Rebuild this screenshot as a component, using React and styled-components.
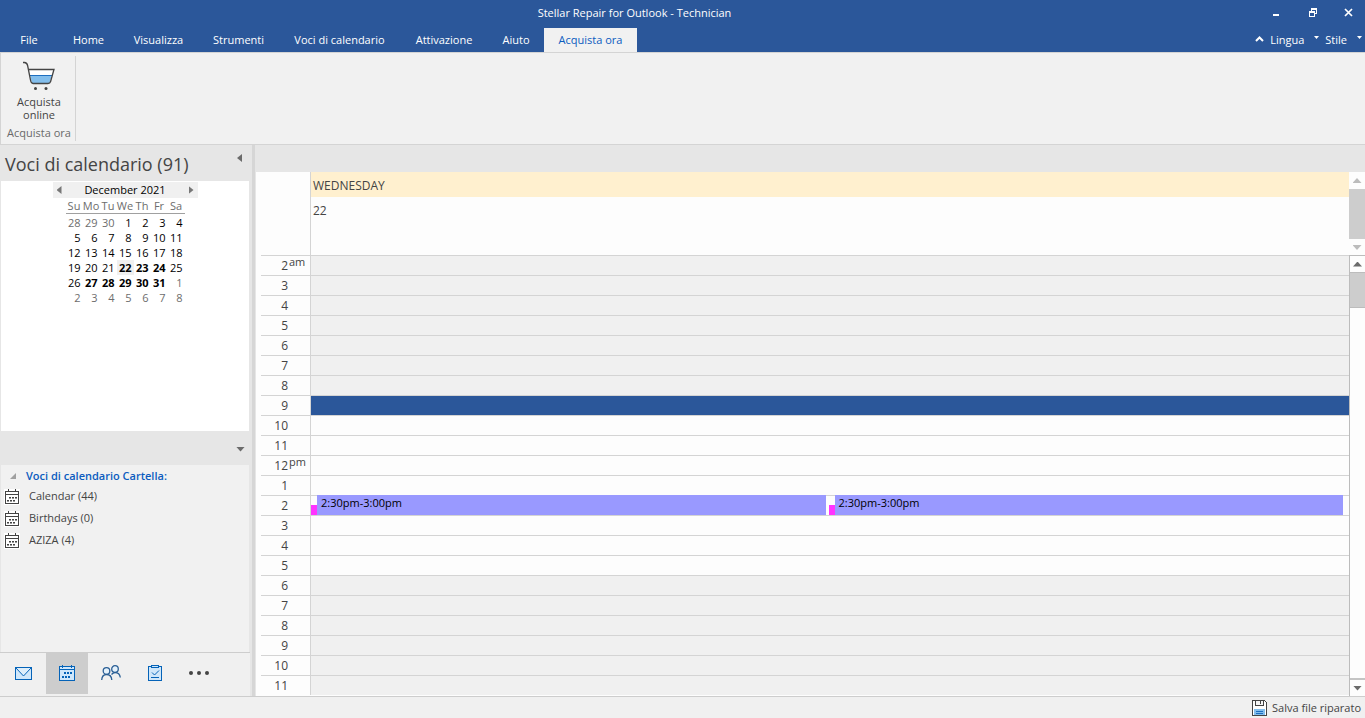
import { useState } from 'react';
import styled, { createGlobalStyle } from 'styled-components';

const tabs = [
  { name: 'File', width: 58 },
  { name: 'Home', width: 61 },
  { name: 'Visualizza', width: 79 },
  { name: 'Strumenti', width: 81 },
  { name: 'Voci di calendario', width: 121 },
  { name: 'Attivazione', width: 88 },
  { name: 'Aiuto', width: 56 },
  { name: 'Acquista ora', width: 93 },
];

const weekdays = ['Su', 'Mo', 'Tu', 'We', 'Th', 'Fr', 'Sa'];

// days of the previous and next month are muted, days with entries are bold
const weeks = [
  [28, 29, 30, 1, 2, 3, 4],
  [5, 6, 7, 8, 9, 10, 11],
  [12, 13, 14, 15, 16, 17, 18],
  [19, 20, 21, 22, 23, 24, 25],
  [26, 27, 28, 29, 30, 31, 1],
  [2, 3, 4, 5, 6, 7, 8],
];
const bold = [22, 23, 24, 27, 28, 29, 30, 31];

const isMuted = (week, day) => (week === 0 && day > 20) || (week > 3 && day < 10);
const isBold = (week, day) => week > 2 && bold.includes(day);

const folders = ['Calendar (44)', 'Birthdays (0)', 'AZIZA (4)'];

const hours = Array.from({ length: 22 }, (_, i) => i + 2);

const events = {
  14: ['2:30pm-3:00pm', '2:30pm-3:00pm'],
};

export default function App() {

  const [activeTab, setActiveTab] = useState('Acquista ora');
  const [activeHour, setActiveHour] = useState(9);

  return (
    <>
    <GlobalStyle />
    <Window>

      <TitleBar>
        <Title>Stellar Repair for Outlook - Technician</Title>
        <WindowButtons>
          <WindowButton aria-label="Minimize"><MinimizeIcon /></WindowButton>
          <WindowButton aria-label="Restore"><RestoreIcon /></WindowButton>
          <WindowButton aria-label="Close"><CloseIcon /></WindowButton>
        </WindowButtons>
      </TitleBar>

      <TabBar>
        {tabs.map(tab => (
          <Tab
            key={tab.name}
            $width={tab.width}
            $active={tab.name === activeTab}
            onClick={() => setActiveTab(tab.name)}
          >
            {tab.name}
          </Tab>
        ))}
        <TabBarOptions>
          <OptionButton>
            <svg width="9" height="8" viewBox="0 0 9 8"><path d="M1 5L4.500 1.500L8 5" fill="none" stroke="#fff" strokeWidth="2" /></svg>
            Lingua
          </OptionButton>
          <OptionButton>
            <SmallCaret />
            Stile
          </OptionButton>
          <SmallCaret />
        </TabBarOptions>
      </TabBar>

      <Ribbon>
        <RibbonGroup>
          <RibbonButton>
            <CartIcon />
            Acquista online
          </RibbonButton>
          <RibbonLabel>Acquista ora</RibbonLabel>
        </RibbonGroup>
      </Ribbon>

      <Body>
        <Sidebar>
          <SidebarHeader>
            <SidebarTitle>Voci di calendario (91)</SidebarTitle>
            <CollapseButton aria-label="Collapse"><Arrow $dir="left" $color="#6b6b6b" /></CollapseButton>
          </SidebarHeader>

          <MonthPanel>
            <MonthBar>
              <IconButton aria-label="Previous month"><Arrow $dir="left" $color="#777" /></IconButton>
              <MonthName>December 2021</MonthName>
              <IconButton aria-label="Next month"><Arrow $dir="right" $color="#777" /></IconButton>
            </MonthBar>
            <MonthTable>
              <thead>
                <tr>{weekdays.map(day => <Weekday key={day}>{day}</Weekday>)}</tr>
              </thead>
              <tbody>
                {weeks.map((week, w) => (
                  <tr key={w}>
                    {week.map(day => (
                      <Day key={day} $muted={isMuted(w, day)} $bold={isBold(w, day)} $today={w === 3 && day === 22}>
                        {day}
                      </Day>
                    ))}
                  </tr>
                ))}
              </tbody>
            </MonthTable>
          </MonthPanel>

          <FilterBar>
            <IconButton aria-label="Options"><WideArrow $dir="down" $color="#6b6b6b" /></IconButton>
          </FilterBar>

          <FolderPanel>
            <FolderHeading>
              <svg width="6" height="6" viewBox="0 0 6 6"><path d="M6 0V6H0Z" fill="#a0a0a0" /></svg>
              Voci di calendario Cartella:
            </FolderHeading>
            {folders.map(folder => (
              <Folder key={folder}>
                <FolderIcon />
                <FolderName>{folder}</FolderName>
              </Folder>
            ))}
          </FolderPanel>

          <NavBar>
            <NavButton aria-label="Mail"><MailIcon /></NavButton>
            <NavButton aria-label="Calendar" $active><CalendarIcon /></NavButton>
            <NavButton aria-label="People"><PeopleIcon /></NavButton>
            <NavButton aria-label="Tasks"><TaskIcon /></NavButton>
            <NavButton aria-label="More"><MoreIcon /></NavButton>
          </NavBar>
        </Sidebar>

        <Splitter />

        <Main>
          <DayHeader>
            <Corner />
            <DayInfo>
              <DayName>WEDNESDAY</DayName>
              <DayNumber>22</DayNumber>
            </DayInfo>
            <ScrollBar>
              <ScrollButton $height={17} aria-label="Scroll header up"><WideArrow $dir="up" $color="#bcbcbc" /></ScrollButton>
              <Thumb $height={50} />
              <ScrollButton $height={17} aria-label="Scroll header down"><WideArrow $dir="down" $color="#bcbcbc" /></ScrollButton>
            </ScrollBar>
          </DayHeader>

          <DayView>
            <Hours>
              {hours.map(hour => (
                <HourRow key={hour}>
                  <HourLabel>
                    <HourNumber>{hour > 12 ? hour - 12 : hour}</HourNumber>
                    {hour === 2 && <Meridiem>am</Meridiem>}
                    {hour === 12 && <Meridiem>pm</Meridiem>}
                  </HourLabel>
                  <Slot
                    $off={hour < 9 || hour > 17}
                    $active={hour === activeHour}
                    onClick={() => setActiveHour(hour)}
                  >
                    {(events[hour] || []).map((time, i) => (
                      <Event key={i}>
                        <EventMark />
                        <EventBody>{time}</EventBody>
                      </Event>
                    ))}
                  </Slot>
                </HourRow>
              ))}
            </Hours>
            <ScrollBar $framed>
              <ScrollButton $height={17} $edge="bottom" aria-label="Scroll up"><WideArrow $dir="up" $color="#6b6b6b" /></ScrollButton>
              <Thumb $height={34} />
              <Track />
              <ScrollButton $height={18} $edge="top" aria-label="Scroll down"><WideArrow $dir="down" $color="#6b6b6b" /></ScrollButton>
            </ScrollBar>
          </DayView>
        </Main>
      </Body>

      <StatusBar>
        <SaveButton>
          <SaveIcon />
          Salva file riparato
        </SaveButton>
      </StatusBar>

    </Window>
    </>
  );
};

const MinimizeIcon = () => (
  <svg width="11" height="11" viewBox="0 0 11 11"><rect x="1" y="7" width="6" height="2" fill="#fff" /></svg>
);

const RestoreIcon = () => (
  <svg width="9" height="9" viewBox="0 0 9 9" fill="#fff" shapeRendering="crispEdges">
    <path d="M2 0H8V6H6V5H7V2H3V3H2Z" />
    <path d="M0 3H6V9H0ZM1 5V8H5V5Z" fillRule="evenodd" />
  </svg>
);

const CloseIcon = () => (
  <svg width="9" height="9" viewBox="0 0 9 9"><path d="M1 1L8 8M8 1L1 8" stroke="#fff" strokeWidth="1.700" /></svg>
);

const SmallCaret = () => (
  <Caret width="5" height="4" viewBox="0 0 5 4"><path d="M0 0H5L2.500 3Z" fill="#fff" /></Caret>
);

const CartIcon = () => (
  <svg width="34" height="30" viewBox="0 0 34 30" fill="none">
    <path d="M7 9H31L29.500 14H8Z" fill="#fff" />
    <path d="M8 14H30L27.500 22H10Z" fill="#83beec" />
    <path d="M8 14.500H30" stroke="#1e6fc0" />
    <path d="M1 1.500H2.500Q5 1.800 5.600 4.500L8.500 19Q9 22.500 11 22.500H26Q28 22.500 28.600 20.500L32 8.500H6.500" stroke="#444" strokeWidth="1.300" />
    <circle cx="13.500" cy="27.500" r="1.500" fill="#444" />
    <circle cx="24" cy="27.500" r="1.500" fill="#444" />
  </svg>
);

const FolderIcon = () => (
  <svg width="16" height="16" viewBox="0 0 16 16" shapeRendering="crispEdges">
    <rect width="16" height="16" fill="#fff" />
    <path d="M1 2H15V15H1ZM2 3V5H14V3ZM2 6V14H14V6Z" fill="#444" fillRule="evenodd" />
    <path d="M4 0H5V3H4ZM11 0H12V3H11Z" fill="#444" />
    <path d="M5 8H7V9H5ZM8 8H10V9H8ZM11 8H13V9H11ZM3 11H5V12H3ZM6 11H8V12H6ZM9 11H11V12H9Z" fill="#444" />
    <path d="M5 9H7V10H5ZM8 9H10V10H8ZM11 9H13V10H11ZM3 12H5V13H3ZM6 12H8V13H6ZM9 12H11V13H9Z" fill="#999" />
  </svg>
);

const MailIcon = () => (
  <svg width="17" height="13" viewBox="0 0 17 13">
    <rect x="0.500" y="0.500" width="16" height="12" fill="#d0e7fa" stroke="#0563b8" />
    <path d="M1 1L8.500 9L16 1" fill="#deeefa" stroke="#0563b8" />
  </svg>
);

const CalendarIcon = () => (
  <svg width="16" height="16" viewBox="0 0 16 16" shapeRendering="crispEdges">
    <rect x="0" y="1" width="16" height="15" fill="#0563b8" />
    <rect x="1" y="2" width="14" height="2" fill="#cfe7fb" />
    <rect x="1" y="5" width="14" height="10" fill="#cfe7fb" />
    <path d="M3 0H4V3H3ZM12 0H13V3H12Z" fill="#0563b8" />
    <path d="M5 7H7V9H5ZM8 7H10V9H8ZM11 7H13V9H11ZM3 11H5V13H3ZM6 11H8V13H6ZM9 11H11V13H9Z" fill="#0563b8" />
  </svg>
);

const PeopleIcon = () => (
  <svg width="20" height="16" viewBox="0 0 20 16" fill="none" stroke="#2b5f95" strokeWidth="1.300">
    <circle cx="14" cy="4" r="3.300" fill="#e4f1fb" />
    <path d="M10.500 9.500Q12 7.700 14 7.700Q18.700 7.700 19.300 12.500" />
    <circle cx="5.500" cy="6" r="3.300" fill="#e4f1fb" />
    <path d="M0.700 15Q1 9.500 5.500 9.500Q10.500 9.500 10.800 15" />
  </svg>
);

const TaskIcon = () => (
  <svg width="14" height="16" viewBox="0 0 14 16" fill="none" stroke="#0563b8">
    <rect x="0.500" y="1.500" width="13" height="14" fill="#d0e7fa" />
    <rect x="3.500" y="0.500" width="7" height="2" fill="#d0e7fa" />
    <path d="M4 7.500L6.500 10L11 5.500M3 12.500H11" />
  </svg>
);

const MoreIcon = () => (
  <svg width="20" height="4" viewBox="0 0 20 4" fill="#444">
    <circle cx="2" cy="2" r="2" />
    <circle cx="10" cy="2" r="2" />
    <circle cx="18" cy="2" r="2" />
  </svg>
);

const SaveIcon = () => (
  <svg width="15" height="16" viewBox="0 0 15 16" shapeRendering="crispEdges">
    <path d="M0.500 0.500H12.500L14.500 2.500V15.500H0.500Z" fill="#fff" stroke="#444" />
    <path d="M3.500 1V5.500H11.500V1" fill="#f5f5f5" stroke="#444" />
    <rect x="8" y="1" width="1" height="3" fill="#444" />
    <rect x="2" y="9" width="11" height="6" fill="#83beec" />
    <path d="M4 11.500H11M4 13.500H11" stroke="#1e6fc0" />
  </svg>
);

const GlobalStyle = createGlobalStyle`
  * {
    box-sizing: border-box;
  }
  body {
    margin: 0;
    overflow: hidden;
    font-family: "Open Sans", "Noto Sans", sans-serif;
    font-size: 11px;
    color: #444;
  }
  button {
    margin: 0;
    padding: 0;
    border: none;
    background: none;
    font: inherit;
    color: inherit;
  }
  svg {
    display: block;
    flex: none;
  }
`
const Window = styled.div`
  height: 100vh;
  display: flex;
  flex-direction: column;
  background-color: #f0f0f0;
`
const TitleBar = styled.header`
  height: 28px;
  flex: none;
  display: grid;
  grid-template-columns: 1fr auto 1fr;
  background-color: #2b579a;
  color: #fff;
`
const Title = styled.div`
  grid-column: 2;
  line-height: 26px;
  padding-right: 96px;
`
const WindowButtons = styled.div`
  display: flex;
  justify-content: flex-end;
`
const WindowButton = styled.button`
  height: 24px;
  width: 36px;
  display: flex;
  justify-content: center;
  align-items: center;
  &:last-child {
    width: 34px;
  }
`
const TabBar = styled.nav`
  height: 24px;
  flex: none;
  display: flex;
  background-color: #2b579a;
  color: #fff;
`
const Tab = styled.button`
  width: ${props => props.$width}px;
  line-height: 24px;
  white-space: nowrap;
  background-color: ${props => props.$active ? '#f1f1f1' : 'transparent'};
  color: ${props => props.$active ? '#0b5cbf' : '#fff'};
`
const TabBarOptions = styled.div`
  margin-left: auto;
  padding-right: 3px;
  display: flex;
  gap: 10px;
`
const OptionButton = styled.button`
  display: flex;
  align-items: center;
  gap: 6px;
  line-height: 24px;
`
const Caret = styled.svg`
  align-self: flex-start;
  margin-top: 8px;
`
const Ribbon = styled.section`
  flex: none;
  height: 93px;
  padding: 3px 0;
  display: flex;
  border: 1px solid #d4d4d4;
  border-right: none;
  background-color: #f1f1f1;
`
const RibbonGroup = styled.div`
  width: 75px;
  padding-left: 2px;
  display: flex;
  flex-direction: column;
  justify-content: space-between;
  border-right: 1px solid #d4d4d4;
`
const RibbonButton = styled.button`
  padding: 5px 12px 0;
  display: flex;
  flex-direction: column;
  align-items: center;
  gap: 4px;
  line-height: 13px;
`
const RibbonLabel = styled.div`
  line-height: 16px;
  text-align: center;
  white-space: nowrap;
  color: #6a6a6a;
`
const Body = styled.div`
  flex: 1;
  min-height: 0;
  display: flex;
  background-color: #e6e6e6;
`
const Sidebar = styled.aside`
  width: 252px;
  flex: none;
  display: flex;
  flex-direction: column;
`
const SidebarHeader = styled.div`
  height: 36px;
  display: flex;
  justify-content: space-between;
  padding: 0 10px 0 5px;
`
const SidebarTitle = styled.h1`
  margin: 0;
  font-size: 18px;
  font-weight: 400;
  line-height: 38px;
  white-space: nowrap;
`
const CollapseButton = styled.button`
  height: 26px;
`
const IconButton = styled.button`
  display: flex;
  align-items: center;
`
const clips = {
  left: 'polygon(100% 0, 100% 100%, 0 50%)',
  right: 'polygon(0 0, 100% 50%, 0 100%)',
  up: 'polygon(50% 0, 100% 100%, 0 100%)',
  down: 'polygon(0 0, 100% 0, 50% 100%)',
};
const Arrow = styled.span`
  display: block;
  width: 5px;
  height: 8px;
  background-color: ${props => props.$color};
  clip-path: ${props => clips[props.$dir]};
`
const WideArrow = styled(Arrow)`
  width: 9px;
  height: 5px;
`
const MonthPanel = styled.section`
  height: 250px;
  flex: none;
  margin: 0 3px 0 1px;
  padding: 1px 0;
  display: flex;
  flex-direction: column;
  align-items: center;
  background-color: #fff;
  color: #000;
`
const MonthBar = styled.div`
  height: 16px;
  width: 145px;
  padding: 0 4px;
  display: flex;
  justify-content: space-between;
  align-items: center;
  background-color: #f0f0f0;
`
const MonthName = styled.div`
  height: 16px;
  line-height: 15px;
`
const MonthTable = styled.table`
  width: 119px;
  table-layout: fixed;
  border-collapse: collapse;
  thead tr {
    border-bottom: 1px solid #a0a0a0;
  }
  tbody::before {
    content: "";
    display: block;
    height: 1px;
  }
`
const Weekday = styled.th`
  height: 15px;
  padding: 0;
  font-weight: 400;
  line-height: 15px;
  color: #6d6d6d;
`
const Day = styled.td`
  height: 15px;
  padding: 0 2px 0 0;
  line-height: 15px;
  text-align: right;
  font-weight: ${props => props.$bold ? 700 : 400};
  color: ${props => props.$muted ? '#6d6d6d' : '#000'};
  background-color: ${props => props.$today ? '#f0f0f0' : 'transparent'};
`
const FilterBar = styled.div`
  height: 34px;
  flex: none;
  padding: 2px 7px 0 0;
  display: flex;
  justify-content: flex-end;
`
const FolderPanel = styled.section`
  flex: 1;
  margin: 0 3px 0 1px;
  background-color: #f1f1f1;
`
const FolderHeading = styled.h2`
  margin: 0;
  height: 21px;
  padding-left: 9px;
  display: flex;
  align-items: center;
  gap: 10px;
  font-size: 11px;
  font-weight: 600;
  line-height: 22px;
  color: #0b5cbf;
`
const Folder = styled.button`
  width: 100%;
  height: 22px;
  padding-left: 3px;
  display: flex;
  align-items: center;
  gap: 9px;
`
const FolderName = styled.span`
  height: 22px;
  line-height: 20px;
`
const NavBar = styled.nav`
  height: 44px;
  flex: none;
  margin-right: 2px;
  padding: 0 0 2px 2px;
  display: flex;
  gap: 2px;
  border-top: 1px solid #cdcdcd;
  background-color: #f0f0f0;
`
const NavButton = styled.button`
  width: 42px;
  padding-bottom: 1px;
  display: flex;
  justify-content: center;
  align-items: center;
  background-color: ${props => props.$active ? '#cdcdcd' : 'transparent'};
`
const Splitter = styled.div`
  width: 4px;
  flex: none;
  background-color: #d6d6d6;
  border-right: 1px solid #e6e6e6;
`
const Main = styled.main`
  flex: 1;
  min-width: 0;
  padding-top: 27px;
  display: flex;
  flex-direction: column;
`
const DayHeader = styled.div`
  height: 83px;
  flex: none;
  display: flex;
  background-color: #fdfdfd;
  font-size: 12px;
`
const Corner = styled.div`
  width: 55px;
  border-right: 1px solid #d4d4d4;
`
const DayInfo = styled.div`
  flex: 1;
`
const DayName = styled.div`
  height: 25px;
  padding-left: 2px;
  line-height: 27px;
  background-color: #fff0cf;
`
const DayNumber = styled.div`
  padding-left: 2px;
  line-height: 27px;
`
const DayView = styled.div`
  flex: 1;
  min-height: 0;
  display: flex;
  background-color: #fdfdfd;
`
const Hours = styled.div`
  flex: 1;
  min-width: 0;
  padding-left: 5px;
  overflow: hidden;
`
const HourRow = styled.div`
  height: 20px;
  display: flex;
`
const HourLabel = styled.div`
  width: 50px;
  display: flex;
  border-top: 1px solid #d4d4d4;
  border-right: 1px solid #d4d4d4;
`
const HourNumber = styled.div`
  width: 27px;
  font-size: 12px;
  line-height: 20px;
  text-align: right;
`
const Meridiem = styled.div`
  padding-left: 1px;
  line-height: 12px;
`
const Slot = styled.div`
  flex: 1;
  padding-right: 6px;
  display: flex;
  gap: 3px;
  border-top: 1px solid #d4d4d4;
  background-color: ${props => props.$active ? '#2b579a' : props.$off ? '#f0f0f0' : '#fdfdfd'};
`
const Event = styled.div`
  flex: 1;
  margin-top: -1px;
  display: flex;
  align-items: flex-end;
`
const EventMark = styled.div`
  width: 6px;
  height: 10px;
  background-color: #ff33ff;
`
const EventBody = styled.div`
  flex: 1;
  height: 20px;
  padding-left: 4px;
  line-height: 16px;
  background-color: #9999ff;
  color: #000;
`
const ScrollBar = styled.div`
  width: 16px;
  flex: none;
  display: flex;
  flex-direction: column;
  background-color: #fdfdfd;
  border-left: ${props => props.$framed ? '1px solid #bcbcbc' : 'none'};
  border-top: ${props => props.$framed ? '1px solid #bcbcbc' : 'none'};
`
const ScrollButton = styled.button`
  height: ${props => props.$height}px;
  flex: none;
  display: flex;
  justify-content: center;
  align-items: center;
  border-top: ${props => props.$edge === 'top' ? '2px solid #c4c4c4' : 'none'};
  border-bottom: ${props => props.$edge === 'bottom' ? '1px solid #bcbcbc' : 'none'};
`
const Thumb = styled.div`
  height: ${props => props.$height}px;
  flex: none;
  background-color: #cdcdcd;
`
const Track = styled.div`
  flex: 1;
  border-top: 1px solid #bcbcbc;
`
const StatusBar = styled.footer`
  height: 22px;
  flex: none;
  padding-right: 4px;
  display: flex;
  justify-content: flex-end;
  border-top: 1px solid #cdcdcd;
`
const SaveButton = styled.button`
  display: flex;
  align-items: center;
  gap: 5px;
`
